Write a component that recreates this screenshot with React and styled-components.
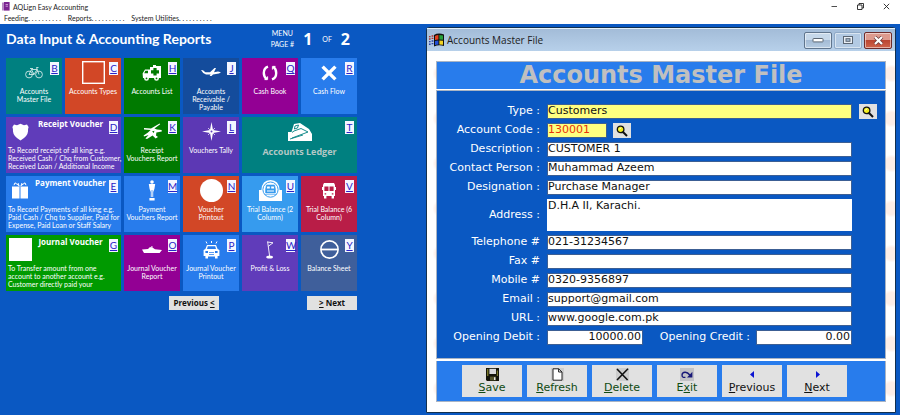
import React from 'react'
import styled, { createGlobalStyle } from 'styled-components'

const GlobalStyle = createGlobalStyle`
  * {
    box-sizing: border-box;
  }

  body {
    margin: 0;
    background: #0a58c2;
    font-family: Lato, 'Open Sans', sans-serif;
  }

  button,
  input,
  textarea {
    font: inherit;
    border: 0;
    border-radius: 0;
    margin: 0;
    padding: 0;
  }
`

/* ---------- tile drawings ---------- */

const BikeIcon = () => (
  <svg width='18' height='13' viewBox='0 0 18 13' fill='none' stroke='#cfe9e6' strokeWidth='0.9'>
    <circle cx='4' cy='8.5' r='3.4' />
    <circle cx='14' cy='8.5' r='3.4' />
    <path d='M4 8.5L6.5 3.5H12L9 8.5H4M6.5 3.5L9 8.5M14 8.5L11.5 1.5H13.5M5 2.5H8' />
  </svg>
)

const SquareIcon = () => (
  <svg width='23' height='23' viewBox='0 0 23 23' fill='none' stroke='#fff'>
    <rect x='0.7' y='0.7' width='21.6' height='21.6' strokeWidth='1.4' />
  </svg>
)

const AmbulanceIcon = () => (
  <svg width='20' height='16' viewBox='0 0 20 16' fill='#fff'>
    <path d='M8 2H11V0H14V1H19V13H1L0.6 8.4L3 4.4H8Z' />
    <circle cx='4.5' cy='13.4' r='2.4' />
    <circle cx='14.5' cy='13.4' r='2.4' />
    <path d='M11.4 3H14.6V5.2H17V8.4H14.6V10.6H11.4V8.4H9V5.2H11.4ZM3.4 5.8H6V8.2H2.2Z' fill='#007a00' />
    <circle cx='4.5' cy='13.4' r='0.9' fill='#007a00' />
    <circle cx='14.5' cy='13.4' r='0.9' fill='#007a00' />
  </svg>
)

const PlaneIcon = () => (
  <svg width='20' height='9' viewBox='0 0 20 9' fill='#fff'>
    <path d='M0 2L2 2.2L4.4 4.2L9 4.3L13.5 0H15L13 4.2L17 3.6L20 4.2L18 5.6L12 6.6L10.5 8H8.6L9.6 6.6H5Q1.8 5.6 0 2Z' />
  </svg>
)

const CycleIcon = () => (
  <svg width='16' height='16' viewBox='0 0 16 16' fill='none' stroke='#fff' strokeWidth='2.4'>
    <path d='M6 1.6Q1.8 3 1.8 8Q1.8 12 4.8 14.2M10 14.4Q14.2 13 14.2 8Q14.2 4 11.2 1.8' />
    <path d='M2.5 14.6H5.6V11.4M13.5 1.4H10.4V4.6' strokeWidth='1' />
  </svg>
)

const CrossIcon = () => (
  <svg width='16' height='16' viewBox='0 0 16 16' stroke='#fff' strokeWidth='3.4'>
    <path d='M1.6 1.6L14.4 14.4M14.4 1.6L1.6 14.4' />
  </svg>
)

const ShieldIcon = () => (
  <svg width='17' height='18' viewBox='0 0 17 18' fill='#fff'>
    <path d='M2 1.5L5 2.2L8.5 0.8L12 2.2L15 1.5L16.6 4Q15.8 6 16 8.5Q15.6 13.5 8.5 17.4Q1.4 13.5 1 8.5Q1.2 6 0.4 4Z' />
  </svg>
)

const CopterIcon = () => (
  <svg width='19' height='17' viewBox='0 0 19 17' fill='#fff'>
    <path d='M1 5L8 5.4L16.6 0.4L17.2 1.2L11.4 5.4L14 6.6L18.6 7L18.8 8.4L13.4 9.6L13 12.6L15 14L12.6 15.6L9.6 12.6L4 16L2.4 15.4L5.6 12L1 13.6L0.6 12.4L5 9.4L7.6 7L1 6.4Z' />
    <path d='M9 8.4L11.4 7.8L10.8 10Z' fill='#007a00' />
  </svg>
)

const StarIcon = () => (
  <svg width='19' height='19' viewBox='0 0 19 19'>
    <path d='M9.5 0L11 8L19 9.5L11 11L9.5 19L8 11L0 9.5L8 8Z' fill='#fff' />
    <path d='M6 6L13 13M13 6L6 13' stroke='#fff' strokeWidth='0.7' />
    <circle cx='9.5' cy='9.5' r='1' fill='#603cba' />
  </svg>
)

const TrainIcon = () => (
  <svg width='24' height='18' viewBox='0 0 24 18' fill='#fff'>
    <path d='M0 9H3.5L6 1L12 0L21 6L24 11V18H0Z' />
    <path d='M4 9.5L6 8L13 5.5L20 9L4 15M7 3L10.5 2L9.5 5L6.4 6ZM2 16L15 12' fill='none' stroke='#008080' strokeWidth='0.9' />
  </svg>
)

const GiftIcon = () => (
  <svg width='16' height='17' viewBox='0 0 16 17' fill='#fff'>
    <path d='M0 4.5H7.5V16.5H0ZM8.5 4.5H16V16.5H8.5Z' />
    <path d='M7.5 4L3 0.8L2 3.2M8.5 4L13 0.8L14 3.2M7 3.6L6 1M9 3.6L10 1' fill='none' stroke='#fff' strokeWidth='1' />
  </svg>
)

const AwardIcon = () => (
  <svg width='8' height='21' viewBox='0 0 8 21' fill='#fff'>
    <circle cx='4' cy='2' r='1.8' />
    <path d='M0.8 4H7.2L6.4 9L5.2 12V17H2.8V12L1.6 9ZM1.4 18H6.6V20.4H1.4Z' />
    <path d='M4 10V17' stroke='#287cec' strokeWidth='0.7' />
  </svg>
)

const DiscIcon = () => (
  <svg width='23' height='23' viewBox='0 0 23 23'>
    <circle cx='11.5' cy='11.5' r='11.5' fill='#fff' />
  </svg>
)

const TunnelIcon = () => (
  <svg width='23' height='21' viewBox='0 0 23 21'>
    <path d='M0 10H2.4Q3 0 11.5 0T20.6 10H23V21H0Z' fill='#fff' />
    <circle cx='11.5' cy='9.6' r='7.6' fill='none' stroke='#369bee' />
    <path d='M7.5 5H15.5L16.4 9V13H6.6V9ZM5.6 14.6H17.4' fill='#369bee' stroke='#369bee' strokeWidth='0.6' />
    <path d='M8.2 6.4H10.8V8.4H7.8ZM12.2 6.4H14.8L15.2 8.4H12.2ZM8 10.4H15V11.4H8Z' fill='#fff' />
  </svg>
)

const BusIcon = () => (
  <svg width='14' height='16' viewBox='0 0 14 16' fill='#fff'>
    <path d='M2 0H12L13 2V13H12V15.4H9.6V13H4.4V15.4H2V13H1V2Z' />
    <path d='M0 4H1V7H0ZM13 4H14V7H13Z' />
    <path d='M2.4 3.4H6.5V8H2.4ZM7.5 3.4H11.6V8H7.5ZM2.6 10.2H4.2V11.4H2.6ZM9.8 10.2H11.4V11.4H9.8Z' fill='#b91d47' />
  </svg>
)

const BlockIcon = () => (
  <svg width='23' height='23' viewBox='0 0 23 23'>
    <rect width='23' height='23' fill='#fff' />
  </svg>
)

const ShipIcon = () => (
  <svg width='20' height='8' viewBox='0 0 20 8' fill='#fff'>
    <path d='M0 3.6L6 3L8 1L9.4 1.4V0H10.4V1.4L13 3.2L20 4L17.6 7H2Z' />
  </svg>
)

const CarIcon = () => (
  <svg width='17' height='18' viewBox='0 0 17 18' fill='#fff'>
    <path d='M3 0.5L4 2.5M8.5 0V2M14 0.5L13 2.5' stroke='#fff' strokeWidth='1' />
    <path d='M4 4H13L14.6 8L16.4 9V15H14.6V17.4H12V15.4H5V17.4H2.4V15H0.6V9L2.4 8Z' />
    <path d='M4.8 5.2H12.2L13 8H4ZM2.4 10H5V12H2.4ZM12 10H14.6V12H12ZM6 11H11V11.8H6ZM6 13H11V13.8H6Z' fill='#287cec' />
  </svg>
)

const FlagIcon = () => (
  <svg width='8' height='18' viewBox='0 0 8 18'>
    <path d='M1.6 0.5L3.6 15' stroke='#fff' strokeWidth='0.9' />
    <path d='M1.6 1L7 1.8L2.2 5.4' fill='none' stroke='#fff' strokeWidth='0.9' />
    <ellipse cx='3.6' cy='16' rx='3.4' ry='1.6' fill='#fff' />
  </svg>
)

const NoEntryIcon = () => (
  <svg width='19' height='19' viewBox='0 0 19 19' fill='none' stroke='#fff'>
    <circle cx='9.5' cy='9.5' r='8.6' strokeWidth='1.6' />
    <path d='M1 9.5H18' strokeWidth='1.8' />
  </svg>
)

/* ---------- form drawings ---------- */

const SearchIcon = () => (
  <svg width='12' height='12' viewBox='0 0 12 12'>
    <circle cx='4.6' cy='4.4' r='3.3' fill='#f4ef1c' stroke='#111' strokeWidth='1.3' />
    <path d='M3.4 4.4L5 2.6' stroke='#fff' strokeWidth='1' />
    <path d='M7 7L11 11' stroke='#111' strokeWidth='2' />
  </svg>
)

const SaveIcon = () => (
  <svg width='13' height='13' viewBox='0 0 13 13'>
    <path d='M0 0H13V13H1L0 12Z' fill='#15150a' />
    <path d='M1 1H2.4V8H1ZM10.8 2.4H12V8H10.8Z' fill='#77762a' />
    <path d='M3.4 0.8H10V6H3.4Z' fill='#d9d9d9' />
    <path d='M4 8.6H10V12.4H4Z' fill='#55552a' />
    <path d='M8 9.2H9.4V12H8Z' fill='#e6e6e6' />
  </svg>
)

const PageIcon = () => (
  <svg width='13' height='13' viewBox='0 0 13 13'>
    <rect width='13' height='13' fill='#cdcdcd' />
    <path d='M2 0.8H7.6L11 4V12.2H2Z' fill='#fff' stroke='#222' />
    <path d='M7.6 0.8V4H11' fill='none' stroke='#222' />
  </svg>
)

const DeleteIcon = () => (
  <svg width='13' height='13' viewBox='0 0 13 13'>
    <rect width='13' height='13' fill='#cdcdcd' />
    <path d='M1 1L11.6 12M12 0.8L1 12' stroke='#111' strokeWidth='1.6' />
  </svg>
)

const ExitIcon = () => (
  <svg width='14' height='13' viewBox='0 0 14 13'>
    <rect width='14' height='13' fill='#c2c2c6' />
    <path d='M5.4 9.4H3.4Q2 9.2 2 7Q2.2 4.4 5 4.2Q7.6 4 9.8 7' fill='none' stroke='#181878' strokeWidth='1.4' />
    <path d='M12.4 3.8V9.6H7Z' fill='#181878' />
  </svg>
)

const ArrowIcon = ({ next }) => (
  <svg width='13' height='13' viewBox='0 0 13 13'>
    <path d={next ? 'M5 3L9 6.5L5 10Z' : 'M8 3L4 6.5L8 10Z'} fill='#0c14d2' />
  </svg>
)

const WindowsLogo = () => (
  <svg width='15' height='14' viewBox='0 0 15 14'>
    <path d='M5 2Q9 -0.5 15 1.4V13Q9.6 11.4 5 13.6Z' fill='#111' />
    <path d='M6 3Q7.6 2 9.4 2V6.4Q7.6 6.4 6 7Z' fill='#e2401e' />
    <path d='M10.4 2L14 2.6V6.8L10.4 6.4Z' fill='#27a03c' />
    <path d='M6 8Q7.6 7.4 9.4 7.4V11.4Q7.6 11.4 6 12Z' fill='#2350d8' />
    <path d='M10.4 7.4L14 7.8V11.8L10.4 11.4Z' fill='#f2d322' />
    <path d='M0 3.6H1.6M2.6 3H4.4M0 6H1.6M2.6 5.4H4.4' stroke='#b0352b' strokeWidth='1.4' />
    <path d='M0 8.6H1.6M2.6 8H4.4M0 11.2H1.6M2.6 10.6H4.4' stroke='#2b3fa8' strokeWidth='1.4' />
  </svg>
)

const AppIcon = () => (
  <svg width='8' height='9' viewBox='0 0 8 9'>
    <rect width='2' height='8' y='0.5' fill='#b78bc4' />
    <rect x='2' width='5.6' height='8.6' fill='#7b2391' />
    <path d='M3.6 2.5H6M3.6 4.2H6' stroke='#d9b6e2' strokeWidth='0.8' />
  </svg>
)

const tiles = [
  { hotkey: 'B', label: 'Accounts\nMaster File', color: '#008080', Icon: BikeIcon },
  { hotkey: 'C', label: 'Accounts Types', color: '#d24726', Icon: SquareIcon },
  { hotkey: 'H', label: 'Accounts List', color: '#007a00', Icon: AmbulanceIcon },
  { hotkey: 'J', label: 'Accounts\nReceivable /\nPayable', color: '#144c9c', Icon: PlaneIcon },
  { hotkey: 'Q', label: 'Cash Book', color: '#930094', Icon: CycleIcon },
  { hotkey: 'R', label: 'Cash Flow', color: '#287cec', Icon: CrossIcon },
  {
    hotkey: 'D',
    title: 'Receipt Voucher',
    text: 'To Record receipt of all king e.g.\nReceived Cash / Chq from Customer,\nReceived Loan / Additional Income',
    color: '#603cba',
    Icon: ShieldIcon,
  },
  { hotkey: 'K', label: 'Receipt\nVouchers Report', color: '#007a00', Icon: CopterIcon },
  { hotkey: 'L', label: 'Vouchers Tally', color: '#5c38b4', Icon: StarIcon },
  { hotkey: 'T', label: 'Accounts Ledger', color: '#008080', Icon: TrainIcon, large: true },
  {
    hotkey: 'E',
    title: 'Payment Voucher',
    text: 'To Record Payments of all king e.g.\nPaid Cash / Chq to Supplier, Paid for\nExpense, Paid Loan or Staff Salary',
    color: '#287cec',
    Icon: GiftIcon,
  },
  { hotkey: 'M', label: 'Payment\nVouchers Report', color: '#287cec', Icon: AwardIcon },
  { hotkey: 'N', label: 'Voucher\nPrintout', color: '#d24726', Icon: DiscIcon },
  { hotkey: 'U', label: 'Trial Balance (2\nColumn)', color: '#369bee', Icon: TunnelIcon },
  { hotkey: 'V', label: 'Trial Balance (6\nColumn)', color: '#b91d47', Icon: BusIcon },
  {
    hotkey: 'G',
    title: 'Journal Voucher',
    text: 'To Transfer amount from one\naccount to another account e.g.\nCustomer directly paid your',
    color: '#009a00',
    Icon: BlockIcon,
  },
  { hotkey: 'O', label: 'Journal Voucher\nReport', color: '#930094', Icon: ShipIcon },
  { hotkey: 'P', label: 'Journal Voucher\nPrintout', color: '#287cec', Icon: CarIcon },
  { hotkey: 'W', label: 'Profit & Loss', color: '#603cba', Icon: FlagIcon },
  { hotkey: 'Y', label: 'Balance Sheet', color: '#3f5f9b', Icon: NoEntryIcon },
]

const actions = [
  { key: 'S', rest: 'ave', Icon: SaveIcon, green: true },
  { key: 'R', rest: 'efresh', Icon: PageIcon, green: true },
  { key: 'D', rest: 'elete', Icon: DeleteIcon, green: true },
  { before: 'E', key: 'x', rest: 'it', Icon: ExitIcon, green: true },
  { key: 'P', rest: 'revious', Icon: () => <ArrowIcon /> },
  { key: 'N', rest: 'ext', Icon: () => <ArrowIcon next /> },
]

function Field({ id, label, value }) {
  return (
    <>
      <Label htmlFor={id}>{label}</Label>
      <Input id={id} defaultValue={value} />
      <span />
    </>
  )
}

function MenuTile({ hotkey, label, title, text, color, Icon, large }) {
  return (
    <Tile type='button' $color={color} $wide={large || title}>
      {title ? (
        <>
          <TileTop>
            <TileIcon $left>
              <Icon />
            </TileIcon>
            <TileTitle>{title}</TileTitle>
          </TileTop>
          <TileText>{text}</TileText>
        </>
      ) : (
        <>
          <TileIcon>
            <Icon />
          </TileIcon>
          <TileLabel $large={large}>{label}</TileLabel>
        </>
      )}
      <Hotkey>{hotkey}</Hotkey>
    </Tile>
  )
}

function MainMenu() {
  return (
    <Menu>
      <MenuHeader>
        <h1>Data Input & Accounting Reports</h1>
        <Pager>
          <span>
            MENU
            <br />
            PAGE #
          </span>
          <strong>1</strong>
          <em>OF</em>
          <strong>2</strong>
        </Pager>
      </MenuHeader>
      <Tiles>
        {tiles.map((tile) => (
          <MenuTile key={tile.hotkey} {...tile} />
        ))}
      </Tiles>
      <MenuFooter>
        <PageButton type='button'>
          Previous <u>&lt;</u>
        </PageButton>
        <PageButton type='button'>
          <u>&gt;</u> Next
        </PageButton>
      </MenuFooter>
    </Menu>
  )
}

function AccountsWindow() {
  return (
    <Window>
      <WindowBar>
        <WindowsLogo />
        <h2>Accounts Master File</h2>
        <WindowButton type='button' aria-label='Minimize'>
          <svg width='12' height='6' viewBox='0 0 12 6'>
            <rect x='1' y='1.5' width='10' height='3.4' rx='0.6' fill='#fff' stroke='#5b6673' />
          </svg>
        </WindowButton>
        <WindowButton type='button' aria-label='Maximize' $dim>
          <svg width='10' height='8' viewBox='0 0 10 8'>
            <rect x='0.5' y='0.5' width='9' height='7' fill='#e8eef5' stroke='#5b6673' />
            <rect x='3' y='2.7' width='4' height='2.6' fill='#a9bdd3' stroke='#5b6673' />
          </svg>
        </WindowButton>
        <WindowButton type='button' aria-label='Close' $close>
          <svg width='11' height='9' viewBox='0 0 11 9'>
            <path d='M2 1L9 8M9 1L2 8' stroke='#6b3a3a' strokeWidth='3.6' />
            <path d='M2 1L9 8M9 1L2 8' stroke='#fff' strokeWidth='2.2' />
          </svg>
        </WindowButton>
      </WindowBar>
      <WindowBody>
        <Banner>Accounts Master File</Banner>
        <Form>
          <Label htmlFor='type'>Type :</Label>
          <Input id='type' defaultValue='Customers' $yellow />
          <SearchButton type='button' aria-label='Find type'>
            <SearchIcon />
          </SearchButton>
          <Label htmlFor='code'>Account Code :</Label>
          <Inline>
            <Input id='code' defaultValue='130001' $yellow $red $width='60px' />
            <SearchButton type='button' aria-label='Find account'>
              <SearchIcon />
            </SearchButton>
          </Inline>
          <span />
          <Field id='description' label='Description :' value='CUSTOMER 1' />
          <Field id='contact' label='Contact Person :' value='Muhammad Azeem' />
          <Field id='designation' label='Designation :' value='Purchase Manager' />
          <Label htmlFor='address'>Address :</Label>
          <TextArea id='address' defaultValue='D.H.A II, Karachi.' />
          <span />
          <Field id='telephone' label='Telephone #' value='021-31234567' />
          <Field id='fax' label='Fax #' value='' />
          <Field id='mobile' label='Mobile #' value='0320-9356897' />
          <Field id='email' label='Email :' value='support@gmail.com' />
          <Field id='url' label='URL :' value='www.google.com.pk' />
          <Label htmlFor='debit'>Opening Debit :</Label>
          <Inline $spread>
            <Input id='debit' defaultValue='10000.00' $right $width='96px' />
            <Label htmlFor='credit'>Opening Credit :</Label>
            <Input id='credit' defaultValue='0.00' $right $width='96px' />
          </Inline>
        </Form>
        <Actions>
          {actions.map(({ before, key, rest, Icon, green }) => (
            <ActionButton key={key} type='button' $green={green}>
              <Icon />
              <span>
                {before}
                <u>{key}</u>
                {rest}
              </span>
            </ActionButton>
          ))}
        </Actions>
      </WindowBody>
    </Window>
  )
}

function App() {
  return (
    <Wrapper>
      <GlobalStyle />
      <TitleBar>
        <AppIcon />
        <span>AQLign Easy Accounting</span>
        <SystemButton type='button' aria-label='Minimize application'>
          <svg width='7' height='7' viewBox='0 0 7 7' stroke='#222' fill='none'>
            <path d='M0.5 3.5H6' strokeWidth='0.8' />
          </svg>
        </SystemButton>
        <SystemButton type='button' aria-label='Restore application'>
          <svg width='7' height='7' viewBox='0 0 7 7' stroke='#222' fill='none' strokeWidth='0.9'>
            <path d='M0.5 2H5V6.5H0.5ZM2 2V0.5H6.5V5H5' />
          </svg>
        </SystemButton>
        <SystemButton type='button' aria-label='Close application'>
          <svg width='7' height='7' viewBox='0 0 7 7' stroke='#222' fill='none' strokeWidth='0.9'>
            <path d='M0.8 0.8L6.2 6.2M6.2 0.8L0.8 6.2' />
          </svg>
        </SystemButton>
      </TitleBar>
      <MenuBar>
        <a href='#feeding'>Feeding. . . . . . . . . .</a>
        <a href='#reports'>Reports. . . . . . . . . .</a>
        <a href='#utilities'>System Utilities. . . . . . . . . .</a>
      </MenuBar>
      <Desktop>
        <MainMenu />
        <AccountsWindow />
      </Desktop>
    </Wrapper>
  )
}

const Wrapper = styled.div`
  display: flex;
  flex-direction: column;
  min-height: 100vh;
`

const TitleBar = styled.header`
  display: flex;
  align-items: center;
  height: 13px;
  padding: 0 9px 0 2px;
  background: #fff;
  color: #222;
  font-size: 7px;
  line-height: 12px;

  span {
    flex: 1;
    margin-left: 3px;
  }
`

const SystemButton = styled.button`
  display: flex;
  justify-content: center;
  align-items: center;
  width: 10px;
  height: 10px;
  margin-left: 16px;
  background: none;
`

const MenuBar = styled.nav`
  display: flex;
  gap: 7px;
  height: 11px;
  padding-left: 4px;
  background: #fff;
  font-size: 7px;
  line-height: 11px;

  a {
    color: #222;
    text-decoration: none;
    white-space: nowrap;
  }
`

const Desktop = styled.div`
  display: flex;
  align-items: flex-start;
  flex: 1;
  padding: 3px 4px 3px 6px;
  background: #0a58c2;
`

const Menu = styled.section`
  flex: 0 0 auto;
  margin-right: 69px;
`

const MenuHeader = styled.div`
  display: flex;
  justify-content: space-between;
  align-items: center;
  height: 24px;
  margin-bottom: 7px;
  color: #fff;

  h1 {
    margin: 0;
    font-size: 14px;
    line-height: 20px;
    font-weight: 700;
  }
`

const Pager = styled.div`
  display: flex;
  align-items: center;
  padding-right: 7px;
  font-size: 7px;
  line-height: 11px;
  text-align: center;

  strong {
    font-family: 'Open Sans', sans-serif;
    font-size: 16px;
    line-height: 20px;
    margin: 0 0 0 9px;
  }

  em {
    margin-left: 10px;
    font-style: normal;
  }
`

const Tiles = styled.div`
  display: grid;
  grid-template-columns: repeat(6, 56px);
  grid-auto-rows: 56px;
  gap: 3px;
`

const Tile = styled.button`
  position: relative;
  display: flex;
  flex-direction: column;
  grid-column: span ${(props) => (props.$wide ? 2 : 1)};
  background: ${(props) => props.$color};
  color: #fff;
  font-size: 7px;
  line-height: 8px;
  text-align: center;
`

const TileTop = styled.span`
  display: flex;
  width: 100%;
`

const TileIcon = styled.span`
  display: flex;
  align-items: center;
  justify-content: center;
  flex: none;
  width: ${(props) => (props.$left ? '28px' : '100%')};
  height: 29px;
`

const TileTitle = styled.strong`
  flex: 1;
  padding: 2px 14px 0 0;
  font-family: 'Open Sans', sans-serif;
  font-size: 8px;
  line-height: 10px;
`

const TileText = styled.span`
  padding-left: 2px;
  text-align: left;
  white-space: pre;
`

const TileLabel = styled.span`
  width: 100%;
  color: ${(props) => (props.$large ? '#b4c8c6' : '#fff')};
  font-family: ${(props) => (props.$large ? "'Open Sans', sans-serif" : 'inherit')};
  font-size: ${(props) => (props.$large ? '9px' : '7px')};
  font-weight: ${(props) => (props.$large ? 700 : 400)};
  line-height: ${(props) => (props.$large ? '12px' : '8px')};
  white-space: pre;
`

const Hotkey = styled.span`
  position: absolute;
  top: 4px;
  right: 3px;
  width: 9px;
  height: 13px;
  background: #f4f6ff;
  color: #2a22c8;
  font-size: 10px;
  line-height: 12px;
  text-decoration: underline;
`

const MenuFooter = styled.div`
  display: flex;
  justify-content: flex-end;
  gap: 88px;
  margin-top: 5px;
`

const PageButton = styled.button`
  width: 50px;
  height: 14px;
  background: #e1e1e1;
  color: #111;
  font-family: 'Open Sans', sans-serif;
  font-size: 8px;
  font-weight: 700;
  line-height: 14px;
`

const Window = styled.section`
  flex: 1;
  min-width: 0;
  border: 1px solid #12304f;
  border-radius: 3px 3px 0 0;
  box-shadow: inset 0 0 0 1px #c9eef8;
  background: #fff;
`

const WindowBar = styled.div`
  display: flex;
  align-items: center;
  height: 23px;
  padding: 0 3px 0 2px;
  border: solid #e4f1fb;
  border-width: 1px 0 0;
  background: linear-gradient(#a3bcd8, #b7d0ea);

  h2 {
    flex: 1;
    margin: 0 0 0 3px;
    color: #1c1c1c;
    font-family: 'Open Sans', sans-serif;
    font-size: 10px;
    font-weight: 400;
  }
`

const WindowButton = styled.button`
  display: flex;
  align-items: center;
  justify-content: center;
  width: 28px;
  height: 17px;
  margin-left: 2px;
  border: 1px solid ${(props) => (props.$close ? '#6d2b2b' : props.$dim ? '#8fa9c6' : '#60758d')};
  border-radius: 2px;
  box-shadow: inset 0 0 0 1px rgba(255, 255, 255, 0.5);
  background: ${(props) =>
    props.$close
      ? 'linear-gradient(#dd9a8e 45%, #bb4632 50%, #d0644c)'
      : props.$dim
        ? '#b3cae3'
        : 'linear-gradient(#c6d8ea 45%, #a4bbd5 50%, #b6cce2)'};
`

const WindowBody = styled.div`
  padding: 10px 9px;
  /* faint watermark */
  background:
    radial-gradient(circle at 50% 50%, #fdeee7 0 6px, transparent 9px) 37px 0 / 45px 45px,
    #fff;
`

const Banner = styled.h3`
  margin: 0;
  border: 1px solid #a9b4c4;
  background: #287cec;
  color: #c0c0c0;
  font-family: 'DejaVu Sans', sans-serif;
  font-size: 24px;
  font-weight: 700;
  line-height: 27px;
  text-align: center;
`

const Form = styled.form`
  display: grid;
  grid-template-columns: 103px 1fr 18px;
  gap: 4px 7px;
  padding: 13px 8px 13px 0;
  border: 1px solid #a9b4c4;
  box-shadow: 0 -1px 0 #fff;
  background: #0a58c2;
  font-family: 'DejaVu Sans', sans-serif;
  font-size: 11px;
  line-height: 13px;
`

const Label = styled.label`
  align-self: center;
  padding-bottom: 2px;
  color: #fff;
  text-align: right;
  white-space: nowrap;
`

const Input = styled.input`
  width: ${(props) => props.$width || '100%'};
  min-width: 0;
  height: 15px;
  padding: 0 2px 2px 1px;
  outline: 1px solid #3c5f94;
  outline-offset: -1px;
  background: ${(props) => (props.$yellow ? '#ffff80' : '#fff')};
  color: ${(props) => (props.$red ? '#e8320a' : '#111')};
  text-align: ${(props) => (props.$right ? 'right' : 'left')};
`

const TextArea = styled.textarea`
  display: block;
  width: 100%;
  height: 32px;
  padding: 0 1px;
  background: #fff;
  color: #111;
  resize: none;
`

const Inline = styled.div`
  display: flex;
  justify-content: ${(props) => (props.$spread ? 'space-between' : 'flex-start')};
  gap: 6px;

  ${Label} {
    flex: 1;
  }
`

const SearchButton = styled.button`
  display: flex;
  align-items: center;
  justify-content: center;
  width: 18px;
  height: 15px;
  background: #e1e1e1;
`

const Actions = styled.div`
  display: flex;
  gap: 5px;
  margin-top: 2px;
  padding: 4px 25px;
  border: solid #a9b4c4;
  border-width: 0 1px 1px;
  background: #287cec;
`

const ActionButton = styled.button`
  display: flex;
  flex-direction: column;
  align-items: center;
  width: 60px;
  height: 32px;
  padding-top: 3px;
  background: #e1e1e1;
  color: ${(props) => (props.$green ? '#0f4a12' : '#111')};
  font-family: 'DejaVu Sans', sans-serif;
  font-size: 11px;
  line-height: 14px;
`

export default App
